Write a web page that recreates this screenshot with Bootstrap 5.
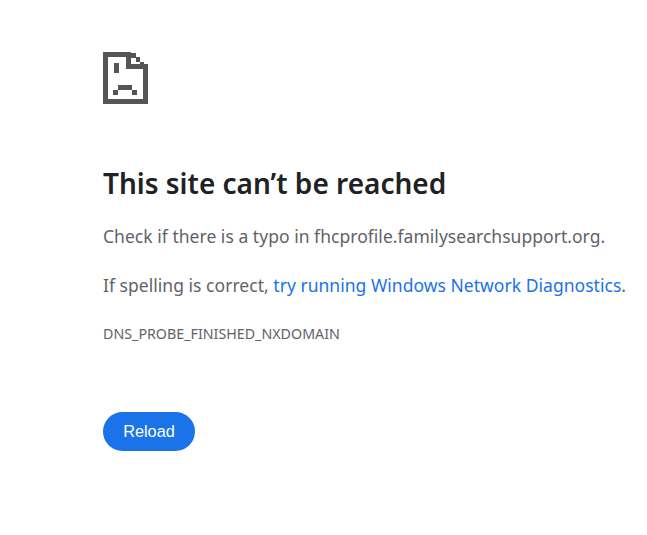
<!DOCTYPE html>
<html lang="en">
<head>
    <meta charset="UTF-8">
    <meta name="viewport" content="width=device-width, initial-scale=1.0">
    <title>This site can't be reached</title>
    <link href="https://cdn.jsdelivr.net/npm/bootstrap@5.3.0/dist/css/bootstrap.min.css" rel="stylesheet">
    <style>
        body { font-family: "Noto Sans", "Open Sans", sans-serif; background: #fff; }
        .err-wrap { padding: 52px 0 0 103px; }
        .err-icon { display: block; width: 45px; height: 52px; }
        .err-title { font-size: 28px; line-height: 36px; font-weight: 600; color: #202124; margin: 61px 0 23px; }
        .err-text { font-size: 17.5px; line-height: 24px; color: #5f6368; margin: 0 0 25px; white-space: nowrap; letter-spacing: 0.03px; }
        .err-link { color: #1a73e8; text-decoration: none; }
        .err-code { font-size: 14.25px; line-height: 20px; color: #5f6368; margin: 27px 0 0; }
        .btn-reload { background: #1a73e8; color: #fff; font-family: "Liberation Sans", Arial, sans-serif; font-size: 16.3px; width: 92px; height: 39px; padding: 0; border: 0; border-radius: 20px; margin-top: 68px; }
        .btn-reload:hover { background: #1a73e8; color: #fff; }
    </style>
</head>
<body>
    <div class="err-wrap">
        <!-- sad page icon -->
        <svg class="err-icon" viewBox="0 0 45 52" shape-rendering="crispEdges" fill="#555">
            <rect x="0" y="0" width="28" height="5"/>
            <rect x="0" y="0" width="5" height="52"/>
            <rect x="0" y="47" width="45" height="5"/>
            <rect x="40" y="12" width="5" height="40"/>
            <rect x="23" y="0" width="5" height="17"/>
            <rect x="23" y="12" width="22" height="5"/>
            <rect x="28" y="1" width="5" height="5"/>
            <rect x="33" y="5" width="4" height="5"/>
            <rect x="37" y="10" width="4" height="4"/>
            <rect x="11" y="11" width="5" height="10"/>
            <rect x="15" y="33" width="14" height="5"/>
            <rect x="10" y="38" width="5" height="5"/>
            <rect x="29" y="38" width="5" height="5"/>
        </svg>
        <h1 class="err-title">This site can’t be reached</h1>
        <p class="err-text">Check if there is a typo in fhcprofile.familysearchsupport.org.</p>
        <p class="err-text mb-0">If spelling is correct, <a class="err-link" href="#">try running Windows Network Diagnostics</a>.</p>
        <p class="err-code">DNS_PROBE_FINISHED_NXDOMAIN</p>
        <button class="btn btn-reload" type="button">Reload</button>
    </div>
    <script src="https://cdn.jsdelivr.net/npm/bootstrap@5.3.0/dist/js/bootstrap.bundle.min.js"></script>
</body>
</html>
